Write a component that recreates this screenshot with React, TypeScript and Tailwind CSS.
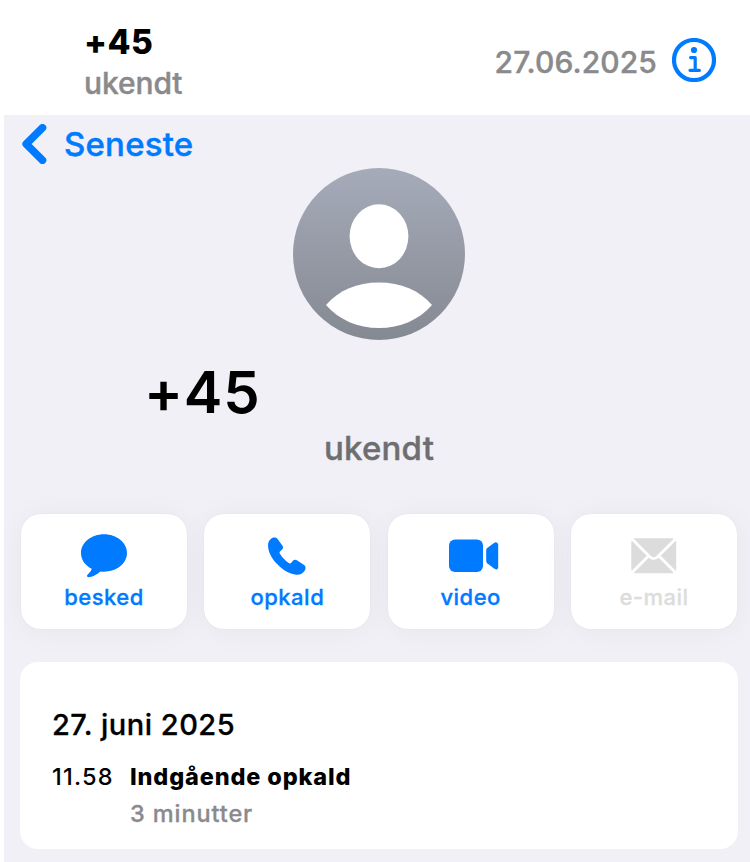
import type { ReactNode } from 'react';

function InfoIcon() {
  return (
    <svg width="44" height="44" viewBox="0 0 44 44" fill="none" stroke="#007aff">
      <circle cx="22" cy="22" r="20" strokeWidth="4.200" />
      <circle cx="22" cy="12" r="3.100" fill="#007aff" stroke="none" />
      <path d="M18.600 19.600H23.200V32.300M18 32.300H27.400" strokeWidth="3.200" strokeLinecap="round" strokeLinejoin="round" />
    </svg>
  );
}

function BackIcon() {
  return (
    <svg width="25" height="40" viewBox="0 0 25 40" fill="none">
      <path d="M20.500 3.800L4.200 20L20.500 36.200" stroke="#007aff" strokeWidth="7.600" strokeLinecap="round" strokeLinejoin="round" />
    </svg>
  );
}

function Avatar() {
  return (
    <svg width="172" height="172" viewBox="0 0 172 172">
      <defs>
        <linearGradient id="avatar" x1="0" y1="0" x2="0" y2="1">
          <stop offset="0" stopColor="#a5abb9" />
          <stop offset="1" stopColor="#858992" />
        </linearGradient>
      </defs>
      <circle cx="86" cy="86" r="86" fill="url(#avatar)" />
      <ellipse cx="86" cy="68.3" rx="29.4" ry="32" fill="#fff" />
      <path d="M33 137C46 122 64 114.5 86 114.5S126 122 139 137C126 152 107 160 86 160S46 152 33 137Z" fill="#fff" />
    </svg>
  );
}

function MessageIcon() {
  return (
    <svg width="46" height="44" viewBox="0 0 46 44" fill="currentColor">
      <path d="M23 .3C35.700 .3 46 8.600 46 19C46 29.400 35.700 37.700 23 37.700C21.700 37.700 20.600 37.600 19.500 37.500C16 40.500 11 43.200 7.600 43.200C6 43.200 5.500 41.900 6.500 40.800C8.500 38.800 10.400 36.600 10.700 34.800C4 31.400 0 25.800 0 19C0 8.600 10.300 .3 23 .3Z" />
    </svg>
  );
}

function PhoneIcon() {
  return (
    <svg width="38" height="38" viewBox="0 0 38 38" fill="currentColor">
      <path d="M2.800 1.900C4.900 .1 7.900 -.1 9.600 1.900L14.300 8.500C15.500 10.200 15.200 11.700 13.700 13.100L12 14.500C11.400 15.100 11.400 15.700 11.800 16.500C12.900 18.500 15 20.900 16.600 22.500C18.200 24.100 20 25.600 21.400 26.300C22.100 26.600 22.600 26.500 23.100 26L24.700 24.100C26 22.600 27.600 22.300 29.300 23.500L36 28.100C38 29.500 38.100 31.900 36.300 34.300C34.300 37 31.600 37.900 28.500 37.700C21 37.300 14.300 32.300 9.600 27.500C4.800 22.600 .4 16 .1 9.400C-.1 6.300 .6 3.700 2.800 1.900Z" />
    </svg>
  );
}

function VideoIcon() {
  return (
    <svg width="50" height="34" viewBox="0 0 50 34" fill="currentColor">
      <rect x="0" y=".6" width="34" height="32.500" rx="6" />
      <path d="M37.200 11.200Q37.200 10 38.200 9.100L45 3.900Q46.200 3.100 47.500 3.400Q49.200 3.900 49.200 5.600V28.200Q49.200 30 47.600 30.400Q46.300 30.600 45 29.600L38.200 24.200Q37.200 23.300 37.200 22Z" />
    </svg>
  );
}

function MailIcon() {
  return (
    <svg width="46" height="36" viewBox="0 0 46 36">
      <rect x=".3" y=".3" width="44.900" height="35" rx="4.500" fill="currentColor" />
      <path d="M0 0L18.500 18.600Q22.700 22.600 26.900 18.600L45.500 0M0 35.600L17 18.600M45.500 35.600L28.500 18.600" stroke="#fff" strokeWidth="2.800" fill="none" />
    </svg>
  );
}

function Action({ label, disabled, children }: { label: string; disabled?: boolean; children: ReactNode }) {
  return (
    <button
      disabled={disabled}
      className={`flex h-[115px] w-[166px] flex-col items-center rounded-[20px] bg-white pt-[19px] shadow-[0_0_2px_rgba(0,0,0,0.06),0_2px_32px_rgba(0,0,0,0.045)] ${disabled ? 'text-[#dcdcdd]' : 'text-[#007aff]'}`}
    >
      <span className="flex h-[46px] items-center justify-center">{children}</span>
      <span className="mt-[3px] text-[22px] leading-[30px] font-medium tracking-[0.500px] [-webkit-text-stroke:0.3px]">{label}</span>
    </button>
  );
}

export default function App() {
  return (
    <div className="flex h-[862px] w-[750px] flex-col overflow-hidden bg-white font-['Inter',sans-serif] text-black">
      <header className="flex h-[115px] shrink-0 pr-[34px] pl-[84px]">
        <div className="flex-1 pt-[22px]">
          <div className="text-[33.500px] leading-[41px] font-extrabold tracking-[0.5px]">+45</div>
          <div className="text-[30px] leading-[40px] font-medium tracking-[-0.1px] text-[#8a8a8d] [-webkit-text-stroke:0.4px]">ukendt</div>
        </div>
        <div className="flex items-start gap-[15px] pt-[38px]">
          <span className="text-[30px] leading-[49px] font-medium tracking-[0.1px] text-[#8a8a8d] [-webkit-text-stroke:0.4px]">27.06.2025</span>
          <InfoIcon />
        </div>
      </header>

      <main className="ml-[4px] flex flex-1 flex-col bg-[#f1f0f6]">
        <nav className="flex h-[53px] items-start gap-[17px] pt-[9px] pl-[18px] text-[#007aff]">
          <BackIcon />
          <span className="text-[33px] leading-[41px] font-medium tracking-[0.2px] [-webkit-text-stroke:0.4px]">Seneste</span>
        </nav>
        <section className="flex flex-col">
          <div className="flex h-[172px] pl-[289px]">
            <Avatar />
          </div>
          <h1 className="mt-[17px] pl-[140px] text-[58px] leading-[70px] font-semibold tracking-[0.8px]">+45</h1>
          <p className="pl-[320px] text-[33px] leading-[42px] font-medium tracking-[0.2px] text-[#6e6e71] [-webkit-text-stroke:0.4px]">ukendt</p>
        </section>

        <div className="mt-[45px] flex justify-between pr-[13px] pl-[17px]">
          <Action label="besked"><MessageIcon /></Action>
          <Action label="opkald"><PhoneIcon /></Action>
          <Action label="video"><span className="ml-[6px]"><VideoIcon /></span></Action>
          <Action label="e-mail" disabled><MailIcon /></Action>
        </div>

        <section className="mt-[33px] mr-[12px] ml-[16px] h-[187px] rounded-[18px] bg-white pt-[43px] pl-[32px]">
          <h2 className="text-[29px] leading-[40px] font-medium tracking-[0.5px] [-webkit-text-stroke:0.3px]">27. juni 2025</h2>
          <div className="mt-[13px] flex text-[23.500px] leading-[37px]">
            <time className="w-[78px] font-medium tracking-[1.2px]">11.58</time>
            <div>
              <div className="font-extrabold tracking-[0.85px]">Indgående opkald</div>
              <div className="font-medium tracking-[0.9px] text-[#8a8a8d] [-webkit-text-stroke:0.3px]">3 minutter</div>
            </div>
          </div>
        </section>
      </main>
    </div>
  );
}
